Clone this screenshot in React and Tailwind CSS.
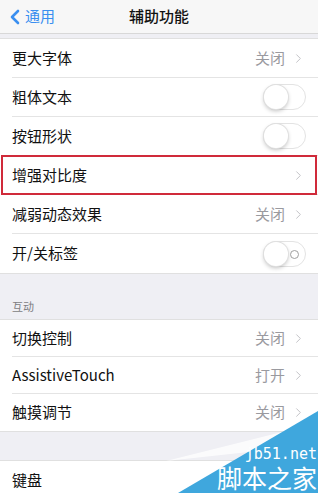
import { ChevronLeft, ChevronRight } from "lucide-react";

const FONT = { fontFamily: '"Noto Sans CJK SC", "Noto Sans", sans-serif' };

function Toggle({ labels }) {
  return (
    <div className="relative h-[26px] w-[43px] rounded-full border border-[#e3e3e3] bg-white">
      <div className="absolute left-0 top-0 h-[24px] w-[24px] rounded-full bg-white shadow-[0_2px_4px_rgba(0,0,0,0.25)] ring-1 ring-[#e0e0e0]" />
      {labels && (
        <div className="absolute right-[6px] top-[8px] h-[9px] w-[9px] rounded-full border border-[#a0a0a0]" />
      )}
    </div>
  );
}

function Row({ label, value, toggle, labels, chevron, last, highlight, h = "h-[39px]" }) {
  return (
    <div className={`relative flex ${h} items-center pl-[12px] bg-white`}>
      {highlight && (
        <div className="pointer-events-none absolute inset-x-[1px] top-[-1px] bottom-[0px] border-2 border-[#d02a3a]" />
      )}
      <div
        className={`flex h-full flex-1 items-center justify-between pr-[12px] ${last ? "" : "border-b border-[#e4e4e4]"}`}
      >
        <span className="text-[15px] text-[#111]">{label}</span>
        <div className="flex items-center gap-[6px]">
          {value && <span className="text-[15px] text-[#9a9a9f]">{value}</span>}
          {chevron && <ChevronRight size={15} strokeWidth={1.6} className="text-[#c4c4c8]" />}
          {toggle && <Toggle labels={labels} />}
        </div>
      </div>
    </div>
  );
}

export default function App() {
  return (
    <div className="relative h-[493px] w-[318px] overflow-hidden bg-[#efeff4]" style={FONT}>
      <div className="relative flex h-[34px] items-center justify-center border-b border-[#d8d8d8] bg-[#f7f7f7]">
        <div className="absolute left-[3px] top-0 flex h-full items-center text-[#3a8ff0]">
          <ChevronLeft size={24} strokeWidth={2.6} />
          <span className="ml-[-2px] text-[15px]">通用</span>
        </div>
        <span className="text-[15px] font-medium text-[#111]">辅助功能</span>
      </div>

      <div className="h-[4px]" />
      <div className="border-y border-[#e0e0e0]">
        <Row label="更大字体" value="关闭" chevron />
        <Row label="粗体文本" toggle />
        <Row label="按钮形状" toggle />
        <Row label="增强对比度" chevron highlight />
        <Row label="减弱动态效果" value="关闭" chevron />
        <Row label="开/关标签" toggle labels last />
      </div>

      <div className="flex h-[45px] items-end pb-[5px] pl-[12px] text-[11px] text-[#7d7d82]">互动</div>
      <div className="border-y border-[#e0e0e0]">
        <Row label="切换控制" value="关闭" chevron h="h-[37px]" />
        <Row label="AssistiveTouch" value="打开" chevron h="h-[37px]" />
        <Row label="触摸调节" value="关闭" chevron last h="h-[37px]" />
      </div>

      <div className="h-[28px]" />
      <div className="border-t border-[#e0e0e0]">
        <Row label="键盘" value="" last />
      </div>

      <svg className="absolute bottom-0 right-0" width="160" height="100" viewBox="0 0 160 100">
        <polygon points="8,68 160,30 100,58" fill="#ffffff" opacity="0.75" />
        <polygon points="20,100 160,18 160,100" fill="#3fa7dd" />
      </svg>
      <div className="absolute bottom-[31px] right-[1px] text-[15px] leading-none text-white" style={{ fontFamily: '"DejaVu Sans Mono", monospace' }}>
        jb51.net
      </div>
      <div className="absolute bottom-[3px] right-[1px] text-[25px] leading-none text-white" style={FONT}>
        脚本之家
      </div>
    </div>
  );
}
